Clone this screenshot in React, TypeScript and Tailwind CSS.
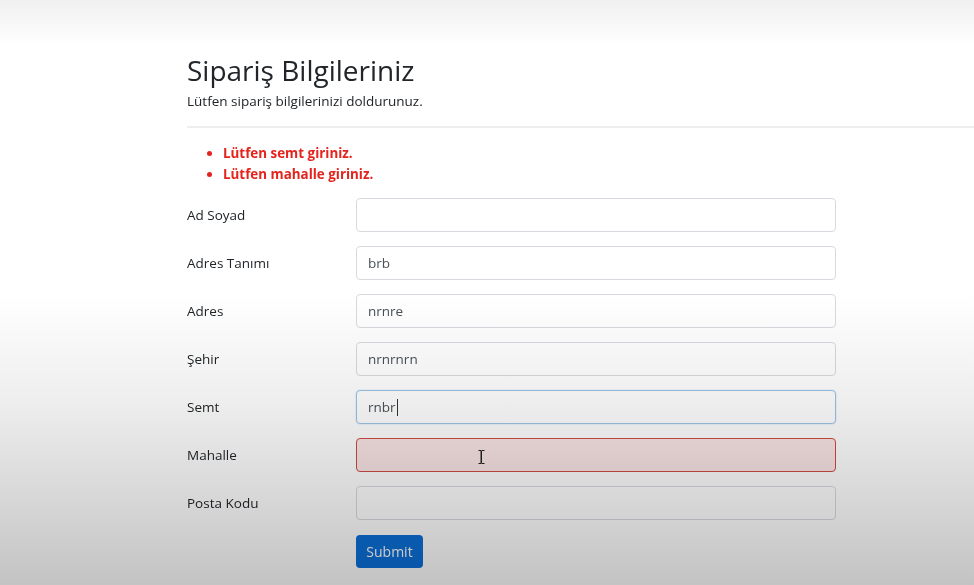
import React from "react";

const rows: { label: string; value: string; kind?: "focus" | "invalid" }[] = [
  { label: "Ad Soyad", value: "" },
  { label: "Adres Tanımı", value: "brb" },
  { label: "Adres", value: "nrnre" },
  { label: "Şehir", value: "nrnrnrn" },
  { label: "Semt", value: "rnbr", kind: "focus" },
  { label: "Mahalle", value: "", kind: "invalid" },
  { label: "Posta Kodu", value: "" },
];

export default function App() {
  return (
    <div
      className="relative h-[585px] w-[974px] overflow-hidden bg-white text-[#212529]"
      style={{ fontFamily: '"Open Sans", "Noto Sans", sans-serif' }}
    >
      <div className="pl-[187px] pt-[53px]">
        <h2 className="text-[28px] leading-[34px] font-[500] text-[#212529]">Sipariş Bilgileriniz</h2>
        <p className="mt-[4px] text-[13.5px] leading-[21px]">Lütfen sipariş bilgilerinizi doldurunuz.</p>
        <div className="mt-[14px] h-[2px] w-full bg-[#eeeeee]" />
        <ul className="mt-[15px] list-disc pl-[36px] text-[13.4px] leading-[21px] font-bold text-[#e4231c] marker:text-[#e4231c]">
          <li>Lütfen semt giriniz.</li>
          <li>Lütfen mahalle giriniz.</li>
        </ul>
        <div className="mt-[13px] flex flex-col gap-[14px]">
          {rows.map((r) => (
            <div key={r.label} className="flex items-center">
              <div className="w-[169px] text-[13.5px] leading-[21px]">{r.label}</div>
              <div
                className={
                  "relative flex h-[34px] w-[480px] items-center rounded-[4px] border px-[11px] text-[13.5px] text-[#495057] " +
                  (r.kind === "focus"
                    ? "border-[#9ec5e6] bg-white shadow-[0_0_0_1px_rgba(128,189,255,0.15)]"
                    : r.kind === "invalid"
                    ? "border-[#cf4a43] bg-[#fbe6e6]"
                    : "border-[#d6dade] bg-white")
                }
              >
                <span>{r.value}</span>
                {r.kind === "focus" && <span className="ml-[1px] inline-block h-[17px] w-[1px] bg-[#333]" />}
                {r.kind === "invalid" && (
                  <svg className="absolute left-[121px] top-[11px]" width="7" height="14" viewBox="0 0 7 14">
                    <path d="M0.5 0.5h2.5v13h-2.5M6.5 0.5h-2.5M6.5 13.5h-2.5M3.5 0.5v13" stroke="#222" strokeWidth="1" fill="none" />
                  </svg>
                )}
              </div>
            </div>
          ))}
        </div>
        <div className="mt-[15px] pl-[169px]">
          <button className="h-[33px] w-[67px] rounded-[4px] bg-[#0b6fd9] text-[14px] text-white">Submit</button>
        </div>
      </div>
      <div className="pointer-events-none absolute inset-0 mix-blend-multiply bg-[linear-gradient(to_bottom,#f0f0f0_0px,#ffffff_45px,#ffffff_295px,#eeeeee_400px,#c3c3c3_585px)]" />
    </div>
  );
}
